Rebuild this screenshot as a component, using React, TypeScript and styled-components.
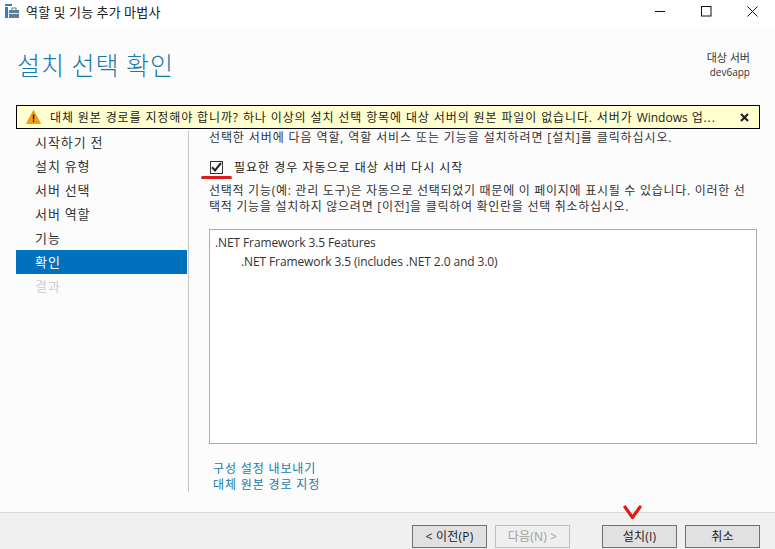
import React from "react";
import styled, { createGlobalStyle } from "styled-components";

const Global = createGlobalStyle`
  html, body { margin: 0; padding: 0; background: #fcfcfc; }
  body { font-family: "Open Sans", "Noto Sans CJK KR", sans-serif; font-size: 12px; color: #333; }
`;
const Window = styled.div`
  width: 775px; height: 549px; display: flex; flex-direction: column; overflow: hidden; position: relative; background: #fcfcfc;
`;
const TitleBar = styled.div`
  height: 27px; background: #fff; display: flex; align-items: center; padding: 0 0 5px 5px; box-sizing: border-box; flex: none;
`;
const TitleText = styled.span`
  margin-left: 6px; font-size: 13px; color: #222; letter-spacing: 0.25px; font-family: "Noto Sans CJK KR", sans-serif;
`;
const WinButtons = styled.div`
  margin-left: auto; display: flex; align-items: center;
`;
const WinButton = styled.div`
  width: 46px; height: 22px; display: flex; align-items: center; justify-content: center;
`;
const Header = styled.div`
  height: 78px; flex: none; display: flex; justify-content: space-between; padding: 0 25px 0 17px; box-sizing: border-box;
`;
const Heading = styled.h1`
  margin: 19px 0 0; font-size: 25px; line-height: 36px; font-weight: 300; color: #1a7ba8; letter-spacing: 1px;
  font-family: "Noto Sans CJK KR", sans-serif;
`;
const Server = styled.div`
  margin-top: 24px; text-align: right; font-size: 10px; line-height: 14px; color: #333; font-family: "Open Sans", "Noto Sans CJK KR", sans-serif;
`;
const ServerLabel = styled.div` font-size: 11px; `;
const Warning = styled.div`
  flex: none; margin: 0 15px 0 16px; height: 24px; box-sizing: border-box; border: 1px solid #000; background: #ffffcf;
  display: flex; align-items: center; padding: 0 10px 0 9px; color: #222; font-size: 12px; white-space: nowrap;
`;
const WarningText = styled.span` margin-left: 9px; flex: 1; letter-spacing: 0.88px; overflow: hidden; `;
const Latin = styled.span` letter-spacing: 0; `;
const Body = styled.div`
  flex: none; height: 363px; display: flex; padding-left: 16px; margin-top: 1px;
`;
const Side = styled.nav`
  width: 172px; height: 362px; border-right: 1px solid #c8c8c8; display: flex; flex-direction: column;
  margin-right: 20px; flex: none;
`;
const Step = styled.div<{ $active?: boolean; $disabled?: boolean }>`
  height: 24px; width: 171px; line-height: 24px; padding-left: 19px; box-sizing: border-box; font-size: 13px; letter-spacing: 0.95px;
  font-family: "Noto Sans CJK KR", sans-serif;
  background: ${p => (p.$active ? "#0071bc" : "transparent")};
  color: ${p => (p.$active ? "#fff" : p.$disabled ? "#cfcfcf" : "#333")};
`;
const Main = styled.div`
  width: 548px; display: flex; flex-direction: column; flex: none;
`;
const Intro = styled.div` line-height: 16px; white-space: nowrap; letter-spacing: 0.89px; `;
const CheckRow = styled.label`
  margin-top: 12px; height: 18px; display: flex; align-items: center; padding-left: 1px; position: relative; color: #222;
`;
const Box = styled.span`
  width: 13px; height: 13px; box-sizing: border-box; border: 1px solid #333; background: #fff; display: flex; align-items: center; justify-content: center;
`;
const CheckLabel = styled.span` margin-left: 11px; letter-spacing: 1px; `;
const Underline = styled.span`
  position: absolute; left: -8px; top: 18px; width: 31px; height: 3px; border-radius: 2px; background: #e01b1b;
`;
const Para = styled.p`
  margin: 7px 0 0; line-height: 16px; letter-spacing: 0.72px; white-space: nowrap;
`;
const ListBox = styled.div`
  margin-top: 14px; height: 215px; width: 548px; box-sizing: border-box; border: 1px solid #acacac; background: #fff; padding: 3px 5px; color: #333; letter-spacing: -0.11px;
`;
const ListItem = styled.div<{ $indent?: boolean }>`
  line-height: 19px; padding-left: ${p => (p.$indent ? "26px" : "0")};
`;
const Links = styled.div` margin-top: 17px; padding-left: 4px; display: flex; flex-direction: column; `;
const LinkText = styled.a` color: #1a7ba8; line-height: 16px; letter-spacing: 0.85px; `;
const Footer = styled.div`
  margin-top: auto; height: 37px; flex: none; border-top: 1px solid #d9d9d9; background: #f0f0f0; display: flex; align-items: center; padding: 10px 15px 0 412px; box-sizing: border-box; position: relative;
`;
const Btn = styled.button<{ $disabled?: boolean; $gap?: number }>`
  width: 75px; height: 23px; padding: 0; box-sizing: border-box; margin-left: ${p => p.$gap ?? 0}px;
  border: 1px solid ${p => (p.$disabled ? "#bfbfbf" : "#707070")}; background: ${p => (p.$disabled ? "#efefef" : "#e1e1e1")};
  color: ${p => (p.$disabled ? "#a0a0a0" : "#222")}; font: inherit; font-size: 12px; letter-spacing: 0.2px; font-family: "Open Sans", "Noto Sans CJK KR", sans-serif;
`;
const RedCheck = styled.svg` position: absolute; left: 623px; top: -8px; `;

export default function App() {
  return (
    <Window>
      <Global />
      <TitleBar>
        <svg width="15" height="15" viewBox="0 0 15 15">
          <rect x="0" y="0" width="7" height="2" fill="#1c86c8" />
          <rect x="0" y="3" width="3" height="11" fill="#1c86c8" />
          <rect x="4" y="6" width="10" height="8" fill="#5f7f94" />
          <rect x="7" y="4" width="4" height="2.5" fill="none" stroke="#5f7f94" />
          <rect x="4" y="9" width="10" height="1" fill="#d5e2ea" />
        </svg>
        <TitleText>역할 및 기능 추가 마법사</TitleText>
        <WinButtons>
          <WinButton>
            <svg width="11" height="11" viewBox="0 0 11 11"><path d="M0 5.5H10" stroke="#111" strokeWidth="1" /></svg>
          </WinButton>
          <WinButton>
            <svg width="11" height="11" viewBox="0 0 11 11"><rect x="0.5" y="0.5" width="9.5" height="9.5" fill="none" stroke="#111" /></svg>
          </WinButton>
          <WinButton>
            <svg width="11" height="11" viewBox="0 0 11 11"><path d="M0.5 0.5L10.5 10.5M10.5 0.5L0.5 10.5" stroke="#111" strokeWidth="1" /></svg>
          </WinButton>
        </WinButtons>
      </TitleBar>
      <Header>
        <Heading>설치 선택 확인</Heading>
        <Server>
          <ServerLabel>대상 서버</ServerLabel>
          <div>dev6app</div>
        </Server>
      </Header>
      <Warning>
        <svg width="15" height="14" viewBox="0 0 15 14">
          <path d="M7.5 0.5L14.5 13.5H0.5Z" fill="#f59b14" stroke="#d98206" strokeWidth="0.6" />
          <rect x="6.8" y="4.5" width="1.5" height="5" fill="#222" />
          <rect x="6.8" y="10.5" width="1.5" height="1.5" fill="#222" />
        </svg>
        <WarningText>대체 원본 경로를 지정해야 합니까? 하나 이상의 설치 선택 항목에 대상 서버의 원본 파일이 없습니다. 서버가 <Latin>Windows</Latin> 업...</WarningText>
        <svg width="9" height="9" viewBox="0 0 9 9"><path d="M1 1L8 8M8 1L1 8" stroke="#222" strokeWidth="2.2" /></svg>
      </Warning>
      <Body>
        <Side>
          <Step>시작하기 전</Step>
          <Step>설치 유형</Step>
          <Step>서버 선택</Step>
          <Step>서버 역할</Step>
          <Step>기능</Step>
          <Step $active>확인</Step>
          <Step $disabled>결과</Step>
        </Side>
        <Main>
          <Intro>선택한 서버에 다음 역할, 역할 서비스 또는 기능을 설치하려면 [설치]를 클릭하십시오.</Intro>
          <CheckRow>
            <Box>
              <svg width="11" height="10" viewBox="0 0 11 10"><path d="M1 5.2L4 8.4L10 1" fill="none" stroke="#222" strokeWidth="2" /></svg>
            </Box>
            <CheckLabel>필요한 경우 자동으로 대상 서버 다시 시작</CheckLabel>
            <Underline />
          </CheckRow>
          <Para>
            선택적 기능(예: 관리 도구)은 자동으로 선택되었기 때문에 이 페이지에 표시될 수 있습니다. 이러한 선
            <br />
            택적 기능을 설치하지 않으려면 [이전]을 클릭하여 확인란을 선택 취소하십시오.
          </Para>
          <ListBox>
            <ListItem>.NET Framework 3.5 Features</ListItem>
            <ListItem $indent>.NET Framework 3.5 (includes .NET 2.0 and 3.0)</ListItem>
          </ListBox>
          <Links>
            <LinkText>구성 설정 내보내기</LinkText>
            <LinkText>대체 원본 경로 지정</LinkText>
          </Links>
        </Main>
      </Body>
      <Footer>
        <Btn>&lt; 이전(P)</Btn>
        <Btn $disabled $gap={8}>다음(N) &gt;</Btn>
        <Btn $gap={32}>설치(I)</Btn>
        <Btn $gap={8}>취소</Btn>
        <RedCheck width="20" height="16" viewBox="0 0 20 16">
          <path d="M2 2L9.5 12.5L17 2" fill="none" stroke="#e01b1b" strokeWidth="3.2" strokeLinecap="round" strokeLinejoin="round" />
        </RedCheck>
      </Footer>
    </Window>
  );
}
